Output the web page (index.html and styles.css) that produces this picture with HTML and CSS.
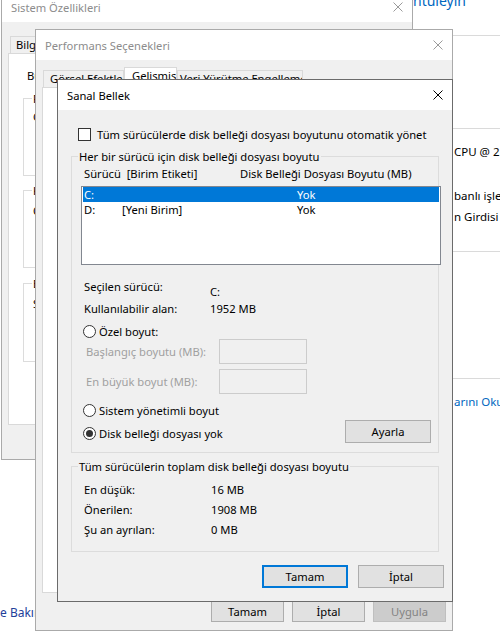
FILE: index.html
```html
<!DOCTYPE html>
<html>
<head>
  <meta charset="utf-8" />
  <meta name="viewport" content="width=device-width" />
  <title>Sanal Bellek</title>
  <link rel="stylesheet" href="styles.css">
</head>

<body>
  <div class="desktop">

    <!-- background settings page, mostly hidden behind the dialogs -->
    <div class="page-right">
      <div class="page-heading">ntuleyin</div>
      <div class="page-sep sep-1"></div>
      <div class="page-sep sep-2"></div>
      <div class="page-line line-cpu">CPU @ 2.50GHz</div>
      <div class="page-line line-type">banlı işlemci</div>
      <div class="page-line line-pen">n Girdisi yok</div>
      <div class="page-sep sep-3"></div>
      <div class="page-sep sep-4"></div>
      <div class="page-line page-link line-read">arını Okuyun</div>
    </div>
    <div class="page-left">
      <div class="page-link-dark">e Bakın</div>
    </div>

    <!-- Sistem Özellikleri -->
    <div class="window sys">
      <div class="title-bar">
        <span>Sistem Özellikleri</span>
        <svg width="10" height="10" viewBox="0 0 10 10"><path d="M0.5 0.5L9.5 9.5M9.5 0.5L0.5 9.5" /></svg>
      </div>
      <div class="sys-body">
        <div class="tabs sys-tabs">
          <div class="tab">Bilgisayar Adı</div>
          <div class="tab">Donanım</div>
          <div class="tab selected">Gelişmiş</div>
          <div class="tab">Sistem Koruması</div>
          <div class="tab">Uzak</div>
        </div>
        <div class="tab-panel sys-panel">
          <p class="sys-intro">Bu değişikliklerin çoğunu yapmak için Yönetici olarak oturum açmalısınız.</p>
          <fieldset class="sys-group g1">
            <legend>Performans</legend>
            <p>Görsel efektler, işlemci zamanlaması, bellek kullanımı ve sanal bellek</p>
          </fieldset>
          <fieldset class="sys-group g2">
            <legend>Kullanıcı Profilleri</legend>
            <p>Oturum açmanızla ilgili masaüstü ayarları</p>
          </fieldset>
          <fieldset class="sys-group g3">
            <legend>Başlangıç ve Kurtarma</legend>
            <p>Sistem başlangıcı, sistem hatası ve hata ayıklama bilgileri</p>
          </fieldset>
        </div>
      </div>
    </div>

    <!-- Performans Seçenekleri -->
    <div class="window perf">
      <div class="title-bar">
        <span>Performans Seçenekleri</span>
        <svg width="10" height="10" viewBox="0 0 10 10"><path d="M0.5 0.5L9.5 9.5M9.5 0.5L0.5 9.5" /></svg>
      </div>
      <div class="perf-body">
        <div class="tabs perf-tabs">
          <div class="tab tab-visual">Görsel Efektler</div>
          <div class="tab selected tab-advanced">Gelişmiş</div>
          <div class="tab tab-dep">Veri Yürütme Engellemesi</div>
        </div>
        <div class="tab-panel perf-panel"></div>
        <div class="perf-buttons">
          <button class="btn btn-small">Tamam</button>
          <button class="btn btn-small">İptal</button>
          <button class="btn btn-small disabled">Uygula</button>
        </div>
      </div>
    </div>

    <!-- Sanal Bellek -->
    <div class="window vm active">
      <div class="title-bar">
        <span>Sanal Bellek</span>
        <svg width="10" height="10" viewBox="0 0 10 10"><path d="M0.5 0.5L9.5 9.5M9.5 0.5L0.5 9.5" /></svg>
      </div>
      <div class="vm-body">
        <div class="check-row">
          <span class="checkbox"></span>
          <span>Tüm sürücülerde disk belleği dosyası boyutunu otomatik yönet</span>
        </div>

        <fieldset class="group group-drives">
          <legend>Her bir sürücü için disk belleği dosyası boyutu</legend>
          <div class="col-head">
            <span class="col-drive">Sürücü&nbsp; [Birim Etiketi]</span>
            <span>Disk Belleği Dosyası Boyutu (MB)</span>
          </div>
          <div class="drive-list">
            <div class="drive-row selected"><span>C:</span><span></span><span>Yok</span></div>
            <div class="drive-row"><span>D:</span><span>[Yeni Birim]</span><span>Yok</span></div>
          </div>

          <div class="drive-info">
            <span>Seçilen sürücü:</span><span class="lower">C:</span>
            <span>Kullanılabilir alan:</span><span>1952 MB</span>
          </div>

          <div class="radio-row radio-custom"><span class="radio"></span><span>Özel boyut:</span></div>
          <div class="size-row">
            <span class="size-label">Başlangıç boyutu (MB):</span>
            <input class="size-input" type="text" disabled>
          </div>
          <div class="size-row size-max">
            <span class="size-label">En büyük boyut (MB):</span>
            <input class="size-input" type="text" disabled>
          </div>
          <div class="radio-row radio-system"><span class="radio"></span><span>Sistem yönetimli boyut</span></div>
          <div class="last-row">
            <div class="radio-row radio-none"><span class="radio checked"></span><span>Disk belleği dosyası yok</span></div>
            <button class="btn">Ayarla</button>
          </div>
        </fieldset>

        <fieldset class="group group-total">
          <legend>Tüm sürücülerin toplam disk belleği dosyası boyutu</legend>
          <div class="total-info">
            <span>En düşük:</span><span>16 MB</span>
            <span>Önerilen:</span><span>1908 MB</span>
            <span>Şu an ayrılan:</span><span>0 MB</span>
          </div>
        </fieldset>

        <div class="vm-buttons">
          <button class="btn default">Tamam</button>
          <button class="btn">İptal</button>
        </div>
      </div>
    </div>

  </div>
</body>
</html>
```

FILE: styles.css
```css
body {
  margin: 0;
  background-color: white;
  color: black;
  font-family: 'Noto Sans', 'Liberation Sans', Arial, sans-serif;
  font-size: 11.2px;
}

.desktop {
  position: relative;
  width: 500px;
  height: 631px;
  overflow: hidden;
}

/* background page */
.page-right {
  position: absolute;
  left: 413px;
  top: 0;
  width: 87px;
  font-size: 11.5px;
  line-height: 18px;
}

.page-heading {
  margin-top: -7px;
  font-size: 14px;
  line-height: 16px;
  color: #0067c0;
  white-space: nowrap;
}

.page-sep {
  border-top: 1px solid #dadada;
}

.sep-1 { margin-top: 26px; }
.sep-2 { margin-top: 92px; }
.sep-3 { margin-top: 25px; }
.sep-4 { margin-top: 126px; }

.page-line {
  margin-left: 41px;
  white-space: nowrap;
}

.line-cpu { margin-top: 14px; }
.line-type { margin-top: 26px; }
.line-pen { margin-top: 3px; }
.line-read { margin-top: 14px; }

.page-link {
  color: #0067c0;
}

.page-left {
  position: absolute;
  left: 0;
  top: 459px;
  width: 40px;
  padding-top: 145px;
  font-size: 12px;
  line-height: 18px;
}

.page-link-dark {
  color: #23409a;
  white-space: nowrap;
}

/* windows */
.window {
  position: absolute;
  display: flex;
  flex-direction: column;
  box-sizing: border-box;
  border: 1px solid #aaaaaa;
  background-color: #f0f0f0;
}

.window.active {
  border-color: #6b6b6b;
}

.title-bar {
  flex: none;
  height: 30px;
  display: flex;
  align-items: center;
  justify-content: space-between;
  padding: 0 9px;
  background-color: white;
  color: #8c8c8c;
  line-height: 15px;
}

.title-bar svg {
  stroke: #9a9a9a;
  stroke-width: 1;
  fill: none;
}

.active .title-bar {
  color: black;
}

.active .title-bar svg {
  stroke: black;
}

.sys {
  left: 1px;
  top: -9px;
  width: 412px;
  height: 469px;
}

.perf {
  left: 35px;
  top: 29px;
  width: 418px;
  height: 602px;
}

.vm {
  left: 57px;
  top: 79px;
  width: 396px;
  height: 523px;
}

/* tabs */
.tabs {
  display: flex;
  align-items: flex-end;
}

.tab {
  box-sizing: border-box;
  height: 17px;
  padding: 0 5px;
  border: 1px solid #d9d9d9;
  border-bottom: none;
  background-color: #f0f0f0;
  line-height: 16px;
  white-space: nowrap;
  overflow: hidden;
}

.tab.selected {
  height: 20px;
  background-color: white;
}

.tab-panel {
  box-sizing: border-box;
  border: 1px solid #d9d9d9;
  background-color: white;
}

/* Sistem Özellikleri */
.sys-body {
  padding: 11px 6px 0;
}

.sys-tabs {
  margin-left: 2px;
}

.sys-panel {
  height: 372px;
  padding: 14px 11px 0 14px;
}

.sys-intro {
  margin: 0 0 0 4px;
  line-height: 15px;
  white-space: nowrap;
}

.sys-group {
  margin: 0;
  padding: 0;
  border: 1px solid #dcdcdc;
  min-width: 0;
}

.sys-group legend {
  margin-left: 8px;
  padding: 0 1px;
  line-height: 15px;
}

.sys-group p {
  margin: 0 0 0 9px;
  line-height: 15px;
  white-space: nowrap;
}

.g1 { margin-top: 8px; }
.g1 p { padding: 3px 0 51px; }
.g2 { margin-top: 7px; }
.g2 p { padding: 5px 0 49px; }
.g3 { margin-top: 8px; }
.g3 p { padding: 5px 0 50px; }

/* Performans Seçenekleri */
.perf-body {
  padding: 7px 6px 8px;
}

.perf-tabs {
  margin-left: 1px;
}

.tab-visual { width: 81px; padding-left: 6px; }
.tab-advanced { width: 53px; padding-left: 7px; }
.tab-dep { width: 126px; padding-left: 2px; }

.perf-panel {
  height: 506px;
}

.perf-buttons {
  display: flex;
  justify-content: flex-end;
  gap: 8px;
  margin-top: 8px;
}

/* buttons */
.btn {
  box-sizing: border-box;
  width: 86px;
  height: 23px;
  padding: 0;
  border: 1px solid #adadad;
  background-color: #e1e1e1;
  color: black;
  font: inherit;
}

.btn.default {
  border: 2px solid #0078d7;
}

.btn-small {
  width: 73px;
  height: 21px;
}

.btn.disabled {
  background-color: #cccccc;
  border-color: #bfbfbf;
  color: #838383;
}

/* Sanal Bellek */
.vm-body {
  flex: 1;
  display: flex;
  flex-direction: column;
  padding-top: 17px;
  line-height: 15px;
}

.check-row {
  display: flex;
  align-items: center;
  gap: 6px;
  margin-left: 20px;
}

.checkbox {
  box-sizing: border-box;
  width: 13px;
  height: 13px;
  border: 1px solid #333333;
  background-color: white;
}

.group {
  margin: 7px 13px 0;
  padding: 2px 0 9px;
  border: 1px solid #dcdcdc;
  min-width: 0;
}

.group legend {
  margin-left: 6px;
  padding: 0 1px;
  line-height: 15px;
}

.col-head {
  display: flex;
  margin-left: 12px;
  white-space: nowrap;
}

.col-drive {
  width: 156px;
}

.drive-list {
  box-sizing: border-box;
  width: 360px;
  height: 79px;
  margin: 5px 0 0 9px;
  padding: 0 1px;
  border: 1px solid #828790;
  background-color: white;
}

.drive-row {
  display: grid;
  grid-template-columns: 38px 175px auto;
  padding-left: 1px;
}

.drive-row.selected {
  background-color: #0078d7;
  color: white;
}

.drive-info {
  display: grid;
  grid-template-columns: 126px auto;
  align-items: start;
  row-gap: 2px;
  margin: 14px 0 0 12px;
}

.drive-info .lower {
  padding-top: 5px;
}

.radio-row {
  display: flex;
  align-items: center;
  gap: 3px;
  margin-left: 11px;
}

.radio {
  box-sizing: border-box;
  width: 13px;
  height: 13px;
  display: flex;
  align-items: center;
  justify-content: center;
  border: 1px solid #333333;
  border-radius: 50%;
  background-color: white;
}

.radio.checked::after {
  content: '';
  width: 7px;
  height: 7px;
  border-radius: 50%;
  background-color: #333333;
}

.radio-custom { margin-top: 8px; }
.radio-system { margin-top: 9px; }

.size-row {
  display: flex;
  align-items: center;
  margin-left: 14px;
  color: #a0a0a0;
}

.size-max {
  margin-top: 5px;
}

.size-label {
  width: 133px;
  white-space: nowrap;
}

.size-input {
  box-sizing: border-box;
  width: 88px;
  height: 25px;
  margin: 0;
  border: 1px solid #cccccc;
  background-color: #f0f0f0;
}

.last-row {
  display: flex;
  align-items: center;
  justify-content: space-between;
  margin: 2px 7px 0 0;
}

.radio-none {
  margin-top: 3px;
}

.group-total {
  margin-top: 6px;
  padding: 8px 0 14px;
}

.total-info {
  display: grid;
  grid-template-columns: 127px auto;
  row-gap: 5px;
  margin-left: 12px;
}

.vm-buttons {
  display: flex;
  justify-content: flex-end;
  gap: 10px;
  margin-top: 13px;
  padding-right: 8px;
}
```
